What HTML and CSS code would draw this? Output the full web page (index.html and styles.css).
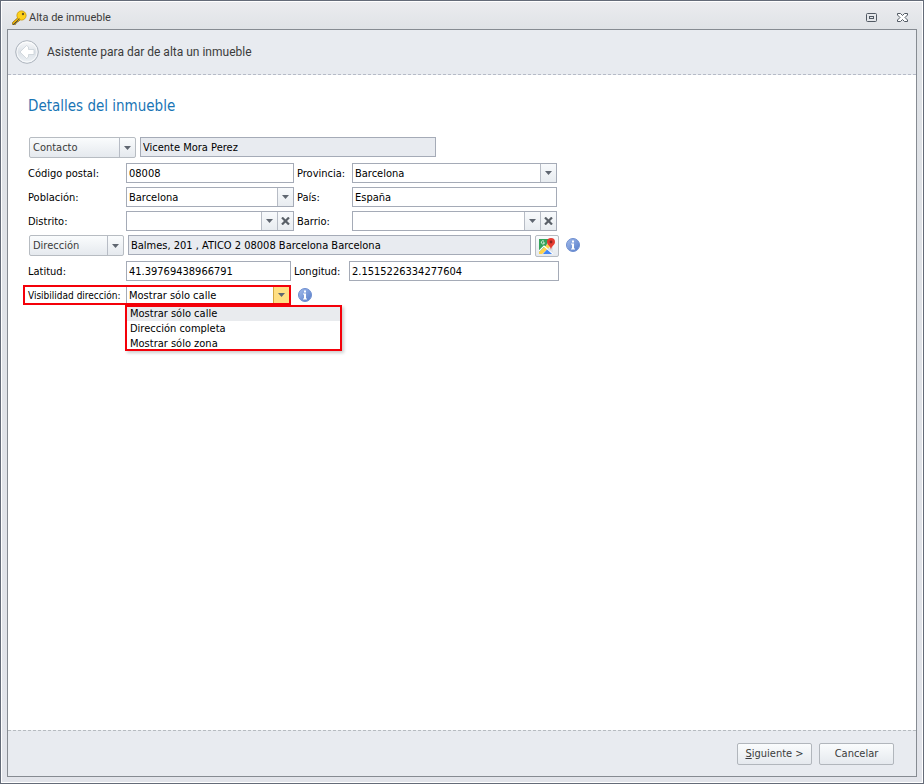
FILE: index.html
```html
<!DOCTYPE html>
<html lang="es">
<head>
<meta charset="utf-8">
<title>Alta de inmueble</title>
<link rel="stylesheet" href="styles.css">
</head>
<body>
<svg class="symbols" aria-hidden="true">
  <symbol id="arrow" viewBox="0 0 7 4"><path d="M0 0h7L3.500 4z" fill="#5f6670"/></symbol>
  <symbol id="cross" viewBox="0 0 9 8"><path d="M1 .5L8 7.500M8 .5L1 7.500" stroke="#5a6068" stroke-width="2.200" fill="none"/></symbol>
  <symbol id="info" viewBox="0 0 14 14">
    <circle cx="7" cy="7" r="6.500" fill="url(#infofill)" stroke="#6f8fd0"/>
    <path d="M6 2.500h2v2H6zM5 5.500h3v5h1v1H5v-1h1v-4H5z" fill="#fff"/>
  </symbol>
  <defs>
    <linearGradient id="infofill" x1="0" y1="0" x2="1" y2="1"><stop offset="0" stop-color="#a5bdeb"/><stop offset="1" stop-color="#537bc9"/></linearGradient>
    <linearGradient id="backfill" x1="0" y1="0" x2="0" y2="1"><stop offset="0" stop-color="#fafbfc"/><stop offset=".5" stop-color="#dde2e8"/><stop offset="1" stop-color="#eef2f6"/></linearGradient>
  </defs>
</svg>
<div class="window">
  <header class="titlebar">
    <svg class="key" viewBox="0 0 16 16" aria-hidden="true">
      <path d="M7 7.500L1.500 12.500v2h3V13H6v-1.500h1.500L10 9z" fill="#f5b800" stroke="#8d7020" stroke-width=".8"/>
      <circle cx="10.500" cy="5.500" r="4.600" fill="#ffd21a" stroke="#c99700" stroke-width=".8"/>
      <path d="M2 14.800l6.500-6" stroke="#444" stroke-width="1"/>
      <circle cx="12" cy="4" r="1.200" fill="#6b5a20"/>
    </svg>
    <h1>Alta de inmueble</h1>
    <button class="wbtn" aria-label="Maximizar"><svg width="11" height="9" viewBox="0 0 11 9"><rect x=".5" y=".5" width="10" height="8" rx="1" fill="none" stroke="#515963"/><rect x="3.500" y="3.500" width="4" height="2" fill="none" stroke="#515963"/></svg></button>
    <button class="wbtn" aria-label="Cerrar"><svg width="11" height="9" viewBox="0 0 11 9"><path d="M.5.5h3l2 2 2-2h3v1.500L8 4.500 10.500 7v1.500h-3l-2-2-2 2h-3V7L3 4.500.5 2z" fill="#fff" stroke="#515963"/></svg></button>
  </header>
  <main class="panel">
    <div class="wizard-head">
      <button class="back" aria-label="Atrás"><svg viewBox="0 0 24 24"><circle cx="12" cy="12" r="11.300" fill="url(#backfill)" stroke="#adb4bd"/><circle cx="12" cy="12" r="10" fill="none" stroke="#fff" stroke-opacity=".7"/><path d="M5 12l6.500-6.500 2 1.500v2.500h5.500v5h-5.500V17l-2 1.500z" fill="#fff" stroke="#c9d0d7" stroke-width=".8" stroke-linejoin="round"/></svg></button>
      <p>Asistente para dar de alta un inmueble</p>
    </div>
    <form class="content">
      <h2>Detalles del inmueble</h2>
      <div class="row tall">
        <div class="split contact"><button type="button">Contacto</button><button type="button" class="more" aria-label="Más opciones de contacto"><svg class="arrow"><use href="#arrow"/></svg></button></div>
        <input class="box name" aria-label="Contacto" value="Vicente Mora Perez" readonly>
      </div>
      <div class="row">
        <label for="cp">Código postal:</label>
        <input class="box first" id="cp" value="08008">
        <label class="second-label" for="prov">Provincia:</label>
        <div class="box combo second"><select id="prov"><option>Barcelona</option></select><span class="drop"><svg class="arrow"><use href="#arrow"/></svg></span></div>
      </div>
      <div class="row">
        <label for="pob">Población:</label>
        <div class="box combo first"><select id="pob"><option>Barcelona</option></select><span class="drop"><svg class="arrow"><use href="#arrow"/></svg></span></div>
        <label class="second-label" for="pais">País:</label>
        <input class="box second" id="pais" value="España">
      </div>
      <div class="row">
        <label for="dist">Distrito:</label>
        <div class="box combo first"><select id="dist"><option></option></select><span class="drop"><svg class="arrow"><use href="#arrow"/></svg></span><button type="button" class="clear" aria-label="Borrar distrito"><svg class="cross"><use href="#cross"/></svg></button></div>
        <label class="second-label" for="barrio">Barrio:</label>
        <div class="box combo second"><select id="barrio"><option></option></select><span class="drop"><svg class="arrow"><use href="#arrow"/></svg></span><button type="button" class="clear" aria-label="Borrar barrio"><svg class="cross"><use href="#cross"/></svg></button></div>
      </div>
      <div class="row tall">
        <div class="split address"><button type="button">Dirección</button><button type="button" class="more" aria-label="Más opciones de dirección"><svg class="arrow"><use href="#arrow"/></svg></button></div>
        <input class="box street" aria-label="Dirección" value="Balmes, 201 , ATICO 2 08008 Barcelona Barcelona" readonly>
        <button type="button" class="map" aria-label="Ver en el mapa"><svg viewBox="0 0 16 16">
          <path d="M0 1h14v15H0z" fill="#dfe3e6"/><path d="M0 1h10L7 8 0 14z" fill="#34a35a"/><path d="M0 14L11 4l2 3L3 16H0z" fill="#ffd24a"/><path d="M4 16l5-5.500 5 5.500z" fill="#4285f4"/><path d="M0 13l5-5 9 8" stroke="#fff" stroke-width="1.200" fill="none"/>
          <path d="M5 3.200a1.600 1.600 0 1 0 .5 1.600H4" stroke="#fff" stroke-width=".8" fill="none"/>
          <path d="M12 0a4 4 0 0 1 4 4c0 3-3.500 3.500-4 8-.5-4.500-4-5-4-8a4 4 0 0 1 4-4z" fill="#e53b30"/><circle cx="12" cy="4" r="1.400" fill="#8c211b"/></svg></button>
        <svg class="info"><use href="#info"/></svg>
      </div>
      <div class="row">
        <label for="lat">Latitud:</label>
        <input class="box lat" id="lat" value="41.39769438966791">
        <label class="second-label" for="lon">Longitud:</label>
        <input class="box lon" id="lon" value="2.1515226334277604">
      </div>
      <div class="row visibility">
        <div class="marked">
          <label for="vis">Visibilidad dirección:</label>
          <div class="combo vis"><select id="vis"><option>Mostrar sólo calle</option><option>Dirección completa</option><option>Mostrar sólo zona</option></select><span class="drop hot"><svg class="arrow"><use href="#arrow"/></svg></span></div>
        </div>
        <svg class="info"><use href="#info"/></svg>
        <ul class="menu" role="listbox" aria-label="Visibilidad dirección">
          <li role="option" aria-selected="true">Mostrar sólo calle</li>
          <li role="option" aria-selected="false">Dirección completa</li>
          <li role="option" aria-selected="false">Mostrar sólo zona</li>
        </ul>
      </div>
    </form>
    <footer class="actions">
      <button class="action"><u>S</u>iguiente &gt;</button>
      <button class="action">Cancelar</button>
    </footer>
  </main>
</div>
</body>
</html>
```

FILE: styles.css
```css
* { box-sizing: border-box; }
body {
  margin: 0;
  font: 11px/15px "DejaVu Sans Condensed", "DejaVu Sans", sans-serif;
  color: #000;
}
h1, h2, p, ul { margin: 0; padding: 0; font-weight: 400; }
button, input, select { font: inherit; color: inherit; margin: 0; border-radius: 0; }
button { padding: 0; border: 0; background: none; }
svg { display: block; flex: none; }
.symbols { position: absolute; width: 0; height: 0; }
.window {
  display: flex;
  flex-direction: column;
  min-height: 100vh;
  padding: 1px 6px 6px;
  border: 1px solid #646b78;
  box-shadow: inset 0 0 0 1px #fff;
  background: linear-gradient(#ebecef, #dfe2e6 30px, #e2e4ea);
}
.titlebar {
  display: flex;
  align-items: center;
  height: 27px;
  padding: 4px 9px 0 4px;
  color: #3b3b3b;
}
.titlebar h1 { flex: 1; font: 11px/16px Roboto, sans-serif; }
.key { width: 16px; height: 16px; margin-right: 2px; }
.wbtn { margin-left: 20px; }
.panel {
  display: flex;
  flex: 1;
  flex-direction: column;
  border: 1px solid #868b92;
  background: #fff;
}
.wizard-head {
  display: flex;
  align-items: center;
  gap: 8px;
  height: 45px;
  padding: 0 7px;
  border-bottom: 1px dashed #b6bbc7;
  background: #e8ebf0;
}
.wizard-head p { font: 12px/16px Roboto, sans-serif; color: #3b3b3b; }
.back svg { width: 24px; height: 24px; }
.content { flex: 1; padding: 20px 20px 0; }
h2 { margin: 0 0 20px; font-size: 15px; line-height: 22px; color: #1975b5; }
.row { display: flex; align-items: center; height: 20px; margin-bottom: 4px; }
.row.tall { align-items: flex-start; height: 22px; margin: 0 0 4px 1px; }
label { width: 98px; padding-top: 1px; white-space: nowrap; }
.box {
  height: 20px;
  padding: 0 2px;
  border: 1px solid #a5abb7;
  background: #fff;
  outline: 0;
}
.box:read-only:not(.combo) { background: #e8ebf0; }
.first { width: 168px; }
.second { width: 205px; }
.second-label { width: 55px; margin-left: 3px; }
.combo.box { padding: 0; }
.combo { display: flex; }
.combo select {
  flex: 1;
  min-width: 0;
  padding: 1px 2px 0;
  border: 0;
  background: transparent;
  appearance: none;
  outline: 0;
}
.drop, .clear, .more {
  display: flex;
  align-items: center;
  justify-content: center;
  width: 16px;
  border-left: 1px solid #b7bcc5;
  background: linear-gradient(#f8fafc, #e8ecf0);
}
.drop { pointer-events: none; }
.arrow { width: 7px; height: 4px; }
.cross { width: 9px; height: 8px; }
.split {
  display: flex;
  height: 21px;
  border: 1px solid #b7bcc2;
  border-radius: 2px;
  background: linear-gradient(#fafcfd, #e5e9ee);
  color: #3b3b3b;
}
.split button:first-child { flex: 1; padding-left: 3px; text-align: left; }
.split .more { background: none; }
.contact { width: 107px; margin-right: 4px; }
.address { width: 95px; margin-right: 4px; }
.name { width: 296px; }
.street { width: 403px; }
.map {
  display: flex;
  align-items: center;
  justify-content: center;
  width: 24px;
  height: 22px;
  margin: 0 7px 0 4px;
  border: 1px solid #b7bcc2;
  border-radius: 2px;
  background: linear-gradient(#fafcfd, #e5e9ee);
}
.map svg { width: 16px; height: 16px; }
.info { width: 14px; height: 14px; }
.tall .info { margin-top: 3px; }
.lat { width: 165px; }
.lon { width: 210px; }
.visibility { position: relative; }
.marked {
  display: flex;
  align-items: center;
  width: 268px;
  height: 20px;
  margin: 0 7px 0 -5px;
  padding-left: 3px;
  border: 2px solid #f40009;
}
.marked label { font-size: 10px; }
.vis { flex: 1; align-self: stretch; border-left: 1px solid #a5abb7; }
.combo.vis select { padding-top: 0; }
.drop.hot { border-color: #d2a640; background: #ffdf83; }
.menu {
  position: absolute;
  top: 20px;
  left: 97px;
  width: 217px;
  padding-top: 1px;
  outline: 2px solid #f40009;
  outline-offset: -2px;
  background: #fff;
  box-shadow: 2px 2px 3px #0003;
  list-style: none;
}
.menu li { height: 15px; padding-left: 5px; }
.menu li[aria-selected="true"] { background: #e9ebee; }
.actions {
  display: flex;
  align-items: center;
  justify-content: flex-end;
  gap: 7px;
  height: 46px;
  padding-right: 22px;
  border-top: 1px dashed #b6bbc0;
  background: #e8ebf0;
}
.action {
  width: 75px;
  height: 22px;
  border: 1px solid #b1b6bc;
  border-radius: 2px;
  background: linear-gradient(#fafcfd, #e5e9ee);
  color: #3b3b3b;
}
```
